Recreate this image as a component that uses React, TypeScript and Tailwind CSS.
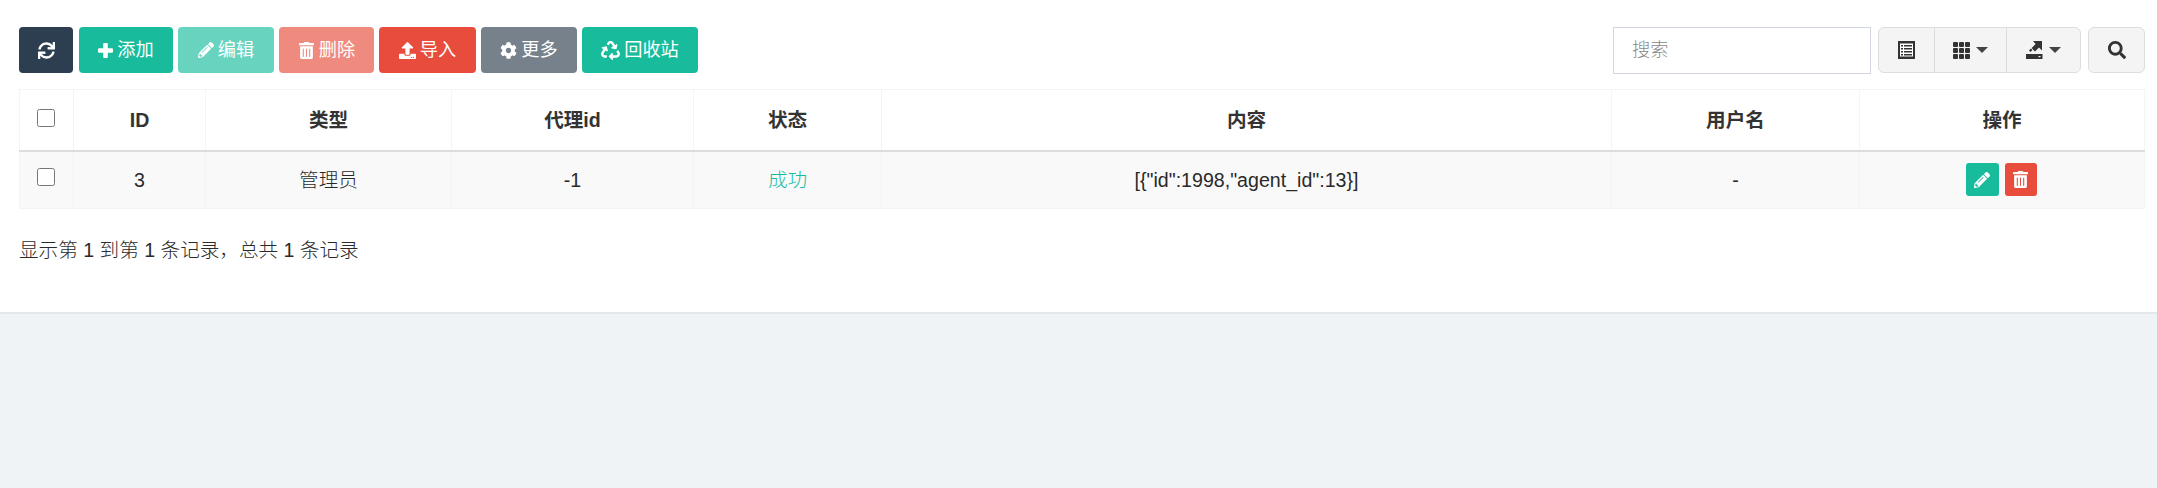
import React from "react";
import { FaSync, FaPencilAlt, FaTrashAlt, FaUpload, FaCog, FaRecycle, FaSearch } from "react-icons/fa";

const font = "[font-family:'Liberation_Sans','Noto_Sans_CJK_SC',sans-serif]";

function Btn({ w, bg, icon, label, dim }: { w: string; bg: string; icon: React.ReactNode; label?: string; dim?: boolean }) {
  return (
    <button className={`${w} ${bg} ${dim ? "opacity-65" : ""} h-[46px] rounded-[4px] text-white text-[18.2px] inline-flex items-center justify-center gap-[4px]`}>
      {icon}
      {label && <span className="pt-[2px]">{label}</span>}
    </button>
  );
}

function Caret() {
  return <span className="inline-block w-0 h-0 ml-[6px] border-x-[6px] border-x-transparent border-t-[6px] border-t-[#444]" />;
}

function Plus() {
  return (
    <svg width="15" height="15" viewBox="0 0 15 15" fill="currentColor">
      <path d="M5.2 1a1 1 0 0 1 1-1h2.6a1 1 0 0 1 1 1v4.2H14a1 1 0 0 1 1 1v2.6a1 1 0 0 1-1 1H9.8V14a1 1 0 0 1-1 1H6.2a1 1 0 0 1-1-1V9.8H1a1 1 0 0 1-1-1V6.2a1 1 0 0 1 1-1h4.2z" />
    </svg>
  );
}

function ListAlt() {
  return (
    <svg width="17" height="18" viewBox="0 0 17 18" className="text-[#333]">
      <rect x="0" y="0" width="17" height="18" fill="currentColor" />
      <rect x="2" y="2.5" width="13" height="13" fill="#fff" />
      <rect x="3" y="4" width="2" height="1.5" fill="currentColor" />
      <rect x="6" y="4" width="8" height="1.5" fill="currentColor" />
      <rect x="3" y="7" width="2" height="1.5" fill="currentColor" />
      <rect x="6" y="7" width="8" height="1.5" fill="currentColor" />
      <rect x="3" y="10" width="2" height="1.5" fill="currentColor" />
      <rect x="6" y="10" width="8" height="1.5" fill="currentColor" />
      <rect x="3" y="13" width="2" height="1.5" fill="currentColor" />
      <rect x="6" y="13" width="8" height="1.5" fill="currentColor" />
    </svg>
  );
}

function Grid() {
  const pos = [0, 6, 12];
  return (
    <svg width="17" height="17" viewBox="0 0 17 17" className="text-[#333]">
      {pos.map((y) =>
        pos.map((x) => <rect key={`${x}-${y}`} x={x} y={y} width="5" height="5" rx="1" fill="currentColor" />)
      )}
    </svg>
  );
}

function ExportIcon() {
  return (
    <svg width="17" height="18" viewBox="0 0 17 18" className="text-[#333]">
      <path d="M0 13h16.5v5H0z" fill="currentColor" />
      <rect x="12.5" y="15" width="2" height="1.2" fill="#f4f4f4" />
      <path d="M7 0h9v9.5l-3-3-4 4-3.4-3.4 4-4z" fill="currentColor" />
      <path d="M3 9.5l2-2 1.5 1.5-2 2z" fill="currentColor" />
    </svg>
  );
}

const th = "border border-[#f4f4f4] border-b-2 border-b-[#dddddd] font-bold text-center align-middle text-[#333] pt-[2px]";
const td = "border border-[#f4f4f4] text-center align-middle text-[#2a2a2a] font-light pt-[2px]";

export default function App() {
  return (
    <div className={`${font} w-full h-[488px] bg-[#eff3f6] text-[19.6px] text-[#333]`}>
      <div className="bg-white h-[314px] border-b-2 border-b-[#e4e7ea] px-[19px] pt-[27px]">
        <div className="flex justify-between items-start pr-[12px] w-[2138px]">
          <div className="flex gap-[5px]">
            <div className="mr-px"><Btn w="w-[54px]" bg="bg-[#2c3e50]" icon={<FaSync size={17} />} /></div>
            <Btn w="w-[94px]" bg="bg-[#18bc9c]" icon={<Plus />} label="添加" />
            <Btn w="w-[96px]" bg="bg-[#18bc9c]" dim icon={<FaPencilAlt size={16} />} label="编辑" />
            <Btn w="w-[95px]" bg="bg-[#e74c3c]" dim icon={<FaTrashAlt size={17} />} label="删除" />
            <Btn w="w-[97px]" bg="bg-[#e74c3c]" icon={<FaUpload size={17} />} label="导入" />
            <Btn w="w-[96px]" bg="bg-[#77818c]" icon={<FaCog size={17} />} label="更多" />
            <Btn w="w-[116px]" bg="bg-[#18bc9c]" icon={<FaRecycle size={19} />} label="回收站" />
          </div>
          <div className="flex">
            <input
              placeholder="搜索"
              className="w-[258px] h-[47px] border border-[#d2d6de] pl-[18px] text-[18.2px] font-light outline-none placeholder:text-[#888888]"
            />
            <div className="flex ml-[7px] h-[46px] w-[203px] bg-[#f4f4f4] border border-[#dddddd] rounded-[6px] text-[#333]">
              <div className="w-[56px] flex items-center justify-center border-r border-r-[#dddddd]"><ListAlt /></div>
              <div className="w-[72px] flex items-center justify-center border-r border-r-[#dddddd]"><Grid /><Caret /></div>
              <div className="flex-1 flex items-center justify-center"><ExportIcon /><Caret /></div>
            </div>
            <div className="ml-[7px] h-[46px] w-[57px] bg-[#f4f4f4] border border-[#dddddd] rounded-[6px] flex items-center justify-center text-[#333]">
              <FaSearch size={18} />
            </div>
          </div>
        </div>
        <table className="table-fixed border-collapse w-[2125px] mt-[15px]">
          <colgroup>
            <col className="w-[54px]" />
            <col className="w-[132px]" />
            <col className="w-[246px]" />
            <col className="w-[242px]" />
            <col className="w-[188px]" />
            <col className="w-[730px]" />
            <col className="w-[248px]" />
            <col className="w-[285px]" />
          </colgroup>
          <thead>
            <tr className="h-[61px]">
              <th className={th}><input type="checkbox" className="w-[18px] h-[18px] align-middle -mt-[7px] -ml-[2px]" /></th>
              <th className={th}>ID</th>
              <th className={th}>类型</th>
              <th className={th}>代理id</th>
              <th className={th}>状态</th>
              <th className={th}>内容</th>
              <th className={th}>用户名</th>
              <th className={th}>操作</th>
            </tr>
          </thead>
          <tbody>
            <tr className="h-[58px] bg-[#f9f9f9]">
              <td className={td}><input type="checkbox" className="w-[18px] h-[18px] align-middle -mt-[9px] -ml-[2px]" /></td>
              <td className={td}>3</td>
              <td className={td}>管理员</td>
              <td className={td}>-1</td>
              <td className={`${td} !text-[#18bc9c]`}>成功</td>
              <td className={td}>{'[{"id":1998,"agent_id":13}]'}</td>
              <td className={td}>-</td>
              <td className={`${td} !pt-0`}>
                <div className="flex justify-center gap-[6px] -ml-[2px]">
                  <span className="w-[33px] h-[33px] rounded-[3px] bg-[#18bc9c] text-white flex items-center justify-center"><FaPencilAlt size={16} /></span>
                  <span className="w-[32px] h-[33px] rounded-[3px] bg-[#e74c3c] text-white flex items-center justify-center"><FaTrashAlt size={17} /></span>
                </div>
              </td>
            </tr>
          </tbody>
        </table>
        <div className="mt-[28px] leading-[26px] font-light text-[#2a2a2a]">显示第 1 到第 1 条记录，总共 1 条记录</div>
      </div>
    </div>
  );
}
